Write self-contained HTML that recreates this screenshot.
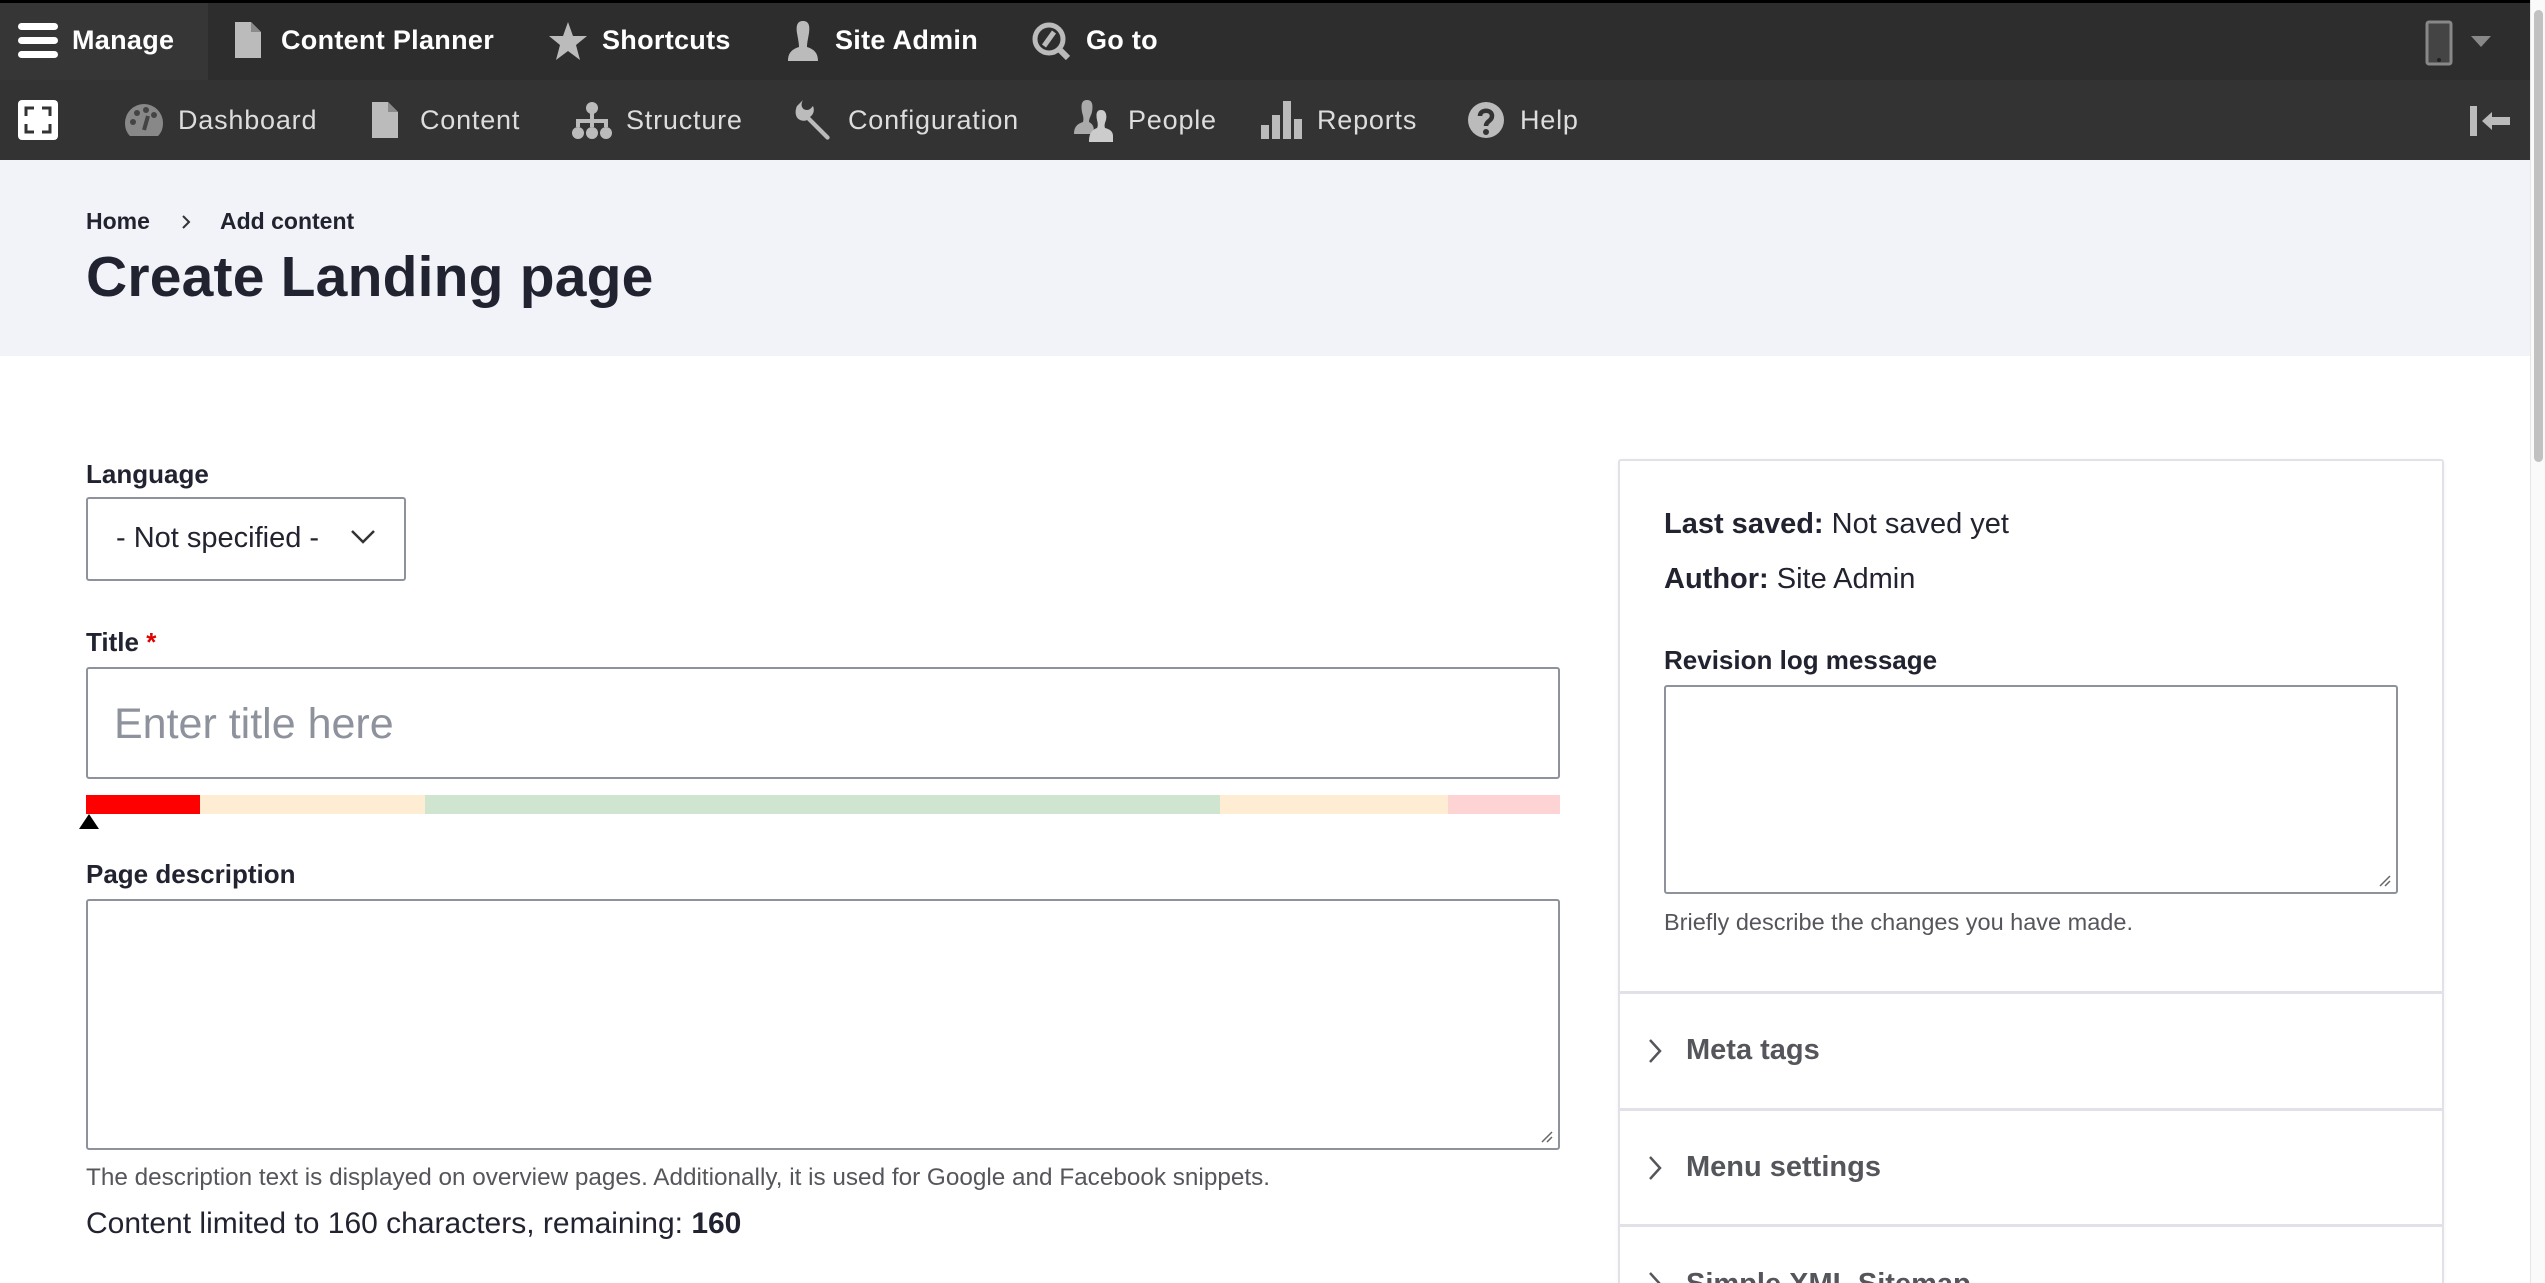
<!DOCTYPE html>
<html style="overflow:hidden;height:1283px"><head><meta charset="utf-8"><style>
*{box-sizing:border-box;margin:0;padding:0}
body{width:2545px;height:1283px;overflow:hidden;background:#fff;font-family:"Liberation Sans",sans-serif;position:relative;color:#222330}
.abs{position:absolute}
#bar1{left:0;top:0;width:2530px;height:80px;background:#2d2d2d;border-top:3px solid #000}
#bar2{left:0;top:80px;width:2530px;height:80px;background:#333}
.t1{position:absolute;top:20px;font-size:27px;font-weight:bold;color:#fff;line-height:40px;letter-spacing:0.3px}
.t2{position:absolute;top:100px;font-size:27px;color:#ddd;line-height:40px;letter-spacing:0.8px}
#hdr{left:0;top:160px;width:2530px;height:196px;background:#f2f3f8}
.lbl{position:absolute;font-size:26px;font-weight:bold;color:#222330}
.box{position:absolute;border:2px solid #8e929c;border-radius:3px;background:#fff}
#sb{left:2530px;top:0;width:15px;height:1283px;background:#fafafa;border-left:1px solid #e6e6e6}
</style></head><body>
<div id="bar1" class="abs"></div>
<div class="abs" style="left:0;top:3px;width:208px;height:77px;background:#363636"></div>
<div id="bar2" class="abs"></div>
<svg class="abs" style="left:18px;top:22px" width="40" height="38"><rect x="0" y="1" width="40" height="7" rx="3.5" fill="#fff"/><rect x="0" y="15" width="40" height="7" rx="3.5" fill="#fff"/><rect x="0" y="29" width="40" height="7" rx="3.5" fill="#fff"/></svg>
<div class="t1" style="left:72px">Manage</div>
<svg class="abs" style="left:235px;top:22px" width="26" height="36"><path d="M0 0H16L26 10V36H0Z" fill="#bbb"/><path d="M16 0V10H26" fill="#8a8a8a"/></svg>
<div class="t1" style="left:281px">Content Planner</div>
<svg class="abs" style="left:548px;top:21px" width="40" height="40"><path d="M20 1L25 15H39L28 24L32 39L20 30L8 39L12 24L1 15H15Z" fill="#bbb"/></svg>
<div class="t1" style="left:602px">Shortcuts</div>
<svg class="abs" style="left:785px;top:21px" width="36" height="40"><path d="M18 0C12 0 11 5 12 12C13 18 14 22 14 26C8 28 3 31 3 40H33C33 31 28 28 22 26C22 22 23 18 24 12C25 5 24 0 18 0Z" fill="#bbb"/></svg>
<div class="t1" style="left:835px">Site Admin</div>
<svg class="abs" style="left:1032px;top:22px" width="40" height="38"><circle cx="17" cy="17" r="14" fill="none" stroke="#bbb" stroke-width="5"/><path d="M12 24L22 10" stroke="#bbb" stroke-width="5"/><path d="M27 27L36 36" stroke="#bbb" stroke-width="6"/></svg>
<div class="t1" style="left:1086px">Go to</div>
<svg class="abs" style="left:2425px;top:20px" width="70" height="46"><rect x="2" y="2" width="24" height="42" rx="2" fill="#444" stroke="#888" stroke-width="3"/><circle cx="14" cy="40" r="2" fill="#222"/><path d="M46 16H66L56 27Z" fill="#888"/></svg>
<svg class="abs" style="left:18px;top:100px" width="40" height="40"><rect x="0" y="0" width="40" height="40" rx="4" fill="#fff"/><path d="M8 16V8H16M24 8H32V16M32 24V32H24M16 32H8V24" stroke="#333" stroke-width="3" fill="none"/></svg>
<svg class="abs" style="left:123px;top:102px" width="42" height="36"><path d="M21 2A19 19 0 0 0 2 21C2 27 4 31 7 34H35C38 31 40 27 40 21A19 19 0 0 0 21 2Z" fill="#888"/><circle cx="10" cy="20" r="3" fill="#444"/><circle cx="14" cy="11" r="3" fill="#444"/><circle cx="23" cy="8" r="3" fill="#444"/><circle cx="31" cy="13" r="3" fill="#444"/><path d="M21 28L25 14" stroke="#444" stroke-width="4"/></svg>
<div class="t2" style="left:178px">Dashboard</div>
<svg class="abs" style="left:372px;top:102px" width="26" height="36"><path d="M0 0H16L26 10V36H0Z" fill="#bbb"/><path d="M16 0V10H26" fill="#8a8a8a"/></svg>
<div class="t2" style="left:420px">Content</div>
<svg class="abs" style="left:572px;top:101px" width="40" height="40"><circle cx="20" cy="7" r="6" fill="#bbb"/><path d="M20 12V20M6 26V20H34V26M20 20V26" stroke="#bbb" stroke-width="4" fill="none"/><circle cx="6" cy="32" r="6" fill="#bbb"/><circle cx="20" cy="32" r="6" fill="#bbb"/><circle cx="34" cy="32" r="6" fill="#bbb"/></svg>
<div class="t2" style="left:626px">Structure</div>
<svg class="abs" style="left:793px;top:100px" width="40" height="42"><path d="M4 6L10 0C7 5 9 10 14 10C17 10 18 8 20 6C22 11 20 15 17 17L36 36C38 38 35 41 33 39L14 20C10 22 4 20 3 15C2 12 3 8 4 6Z" fill="#bbb"/></svg>
<div class="t2" style="left:848px">Configuration</div>
<svg class="abs" style="left:1073px;top:100px" width="40" height="42"><path d="M14 0C8 0 8 6 9 12C10 16 11 18 10 22C4 24 1 27 1 34H20C22 28 20 24 16 22C16 18 18 16 19 12C20 6 20 0 14 0Z" fill="#aaa"/><path d="M28 10C23 10 23 15 24 20C25 24 25 26 24 28C19 30 16 33 16 42H40V36C40 31 36 29 32 28C31 25 32 23 33 20C34 15 33 10 28 10Z" fill="#ccc"/></svg>
<div class="t2" style="left:1128px">People</div>
<svg class="abs" style="left:1261px;top:101px" width="42" height="38"><rect x="0" y="24" width="8" height="14" fill="#bbb"/><rect x="11" y="14" width="8" height="24" fill="#bbb"/><rect x="22" y="0" width="8" height="38" fill="#bbb"/><rect x="33" y="18" width="8" height="20" fill="#bbb"/></svg>
<div class="t2" style="left:1317px">Reports</div>
<svg class="abs" style="left:1467px;top:101px" width="38" height="38"><circle cx="19" cy="19" r="18" fill="#bbb"/><path d="M13 15C13 8 25 8 25 15C25 20 19 20 19 25" stroke="#333" stroke-width="4.5" fill="none"/><circle cx="19" cy="31" r="3" fill="#333"/></svg>
<div class="t2" style="left:1520px">Help</div>
<svg class="abs" style="left:2470px;top:104px" width="42" height="34"><rect x="0" y="2" width="7" height="30" fill="#bbb"/><path d="M12 17L22 8V13H40V21H22V26Z" fill="#bbb"/></svg>
<div id="hdr" class="abs"></div>
<div class="abs" style="left:86px;top:208px;font-size:23px;font-weight:bold">Home</div>
<svg class="abs" style="left:180px;top:213px" width="12" height="18"><path d="M3 3L9 9L3 15" stroke="#333" stroke-width="2" fill="none"/></svg>
<div class="abs" style="left:220px;top:208px;font-size:23px;font-weight:bold">Add content</div>
<div class="abs" style="left:86px;top:244px;font-size:57px;font-weight:bold;letter-spacing:0.2px">Create Landing page</div>
<div class="lbl" style="left:86px;top:459px">Language</div>
<div class="box" style="left:86px;top:497px;width:320px;height:84px"></div>
<div class="abs" style="left:116px;top:522px;font-size:29px">- Not specified -</div>
<svg class="abs" style="left:350px;top:528px" width="26" height="18"><path d="M2 3L13 14L24 3" stroke="#333" stroke-width="2.5" fill="none"/></svg>
<div class="lbl" style="left:86px;top:627px">Title <span style="color:#e00000">*</span></div>
<div class="box" style="left:86px;top:667px;width:1474px;height:112px"></div>
<div class="abs" style="left:114px;top:700px;font-size:43px;color:#8e929c">Enter title here</div>
<div class="abs" style="left:86px;top:795px;width:114px;height:19px;background:#f00"></div>
<div class="abs" style="left:200px;top:795px;width:225px;height:19px;background:#feecd3"></div>
<div class="abs" style="left:425px;top:795px;width:795px;height:19px;background:#cfe5d0"></div>
<div class="abs" style="left:1220px;top:795px;width:228px;height:19px;background:#feecd3"></div>
<div class="abs" style="left:1448px;top:795px;width:112px;height:19px;background:#fdd3d3"></div>
<svg class="abs" style="left:78px;top:814px" width="22" height="16"><path d="M11 0L21 15H1Z" fill="#000"/></svg>
<div class="lbl" style="left:86px;top:859px">Page description</div>
<div class="box" style="left:86px;top:899px;width:1474px;height:251px"></div>
<svg class="abs" style="left:1540px;top:1130px" width="14" height="14"><path d="M2 12L12 2M7 12L12 7" stroke="#666" stroke-width="1.5"/></svg>
<div class="abs" style="left:86px;top:1164px;font-size:24.3px;color:#55565b">The description text is displayed on overview pages. Additionally, it is used for Google and Facebook snippets.</div>
<div class="abs" style="left:86px;top:1207px;font-size:30px">Content limited to 160 characters, remaining: <b>160</b></div>
<div class="abs" style="left:1618px;top:459px;width:826px;height:840px;border:2px solid #e1e2e7;border-radius:3px;background:#fff;box-shadow:0 1px 3px rgba(0,0,0,.06)"></div>
<div class="abs" style="left:1664px;top:508px;font-size:29px"><b>Last saved:</b> Not saved yet</div>
<div class="abs" style="left:1664px;top:563px;font-size:29px"><b>Author:</b> Site Admin</div>
<div class="lbl" style="left:1664px;top:645px">Revision log message</div>
<div class="box" style="left:1664px;top:685px;width:734px;height:209px"></div>
<svg class="abs" style="left:2378px;top:874px" width="14" height="14"><path d="M2 12L12 2M7 12L12 7" stroke="#666" stroke-width="1.5"/></svg>
<div class="abs" style="left:1664px;top:909px;font-size:23.5px;color:#55565b">Briefly describe the changes you have made.</div>
<div class="abs" style="left:1620px;top:991px;width:822px;height:3px;background:#e1e2e7"></div>
<svg class="abs" style="left:1647px;top:1038px" width="16" height="26"><path d="M3 2L13 13L3 24" stroke="#55565b" stroke-width="2.5" fill="none"/></svg>
<div class="abs" style="left:1686px;top:1034px;font-size:29px;font-weight:bold;color:#55565b">Meta tags</div>
<div class="abs" style="left:1620px;top:1108px;width:822px;height:3px;background:#e1e2e7"></div>
<svg class="abs" style="left:1647px;top:1155px" width="16" height="26"><path d="M3 2L13 13L3 24" stroke="#55565b" stroke-width="2.5" fill="none"/></svg>
<div class="abs" style="left:1686px;top:1151px;font-size:29px;font-weight:bold;color:#55565b">Menu settings</div>
<div class="abs" style="left:1620px;top:1224px;width:822px;height:3px;background:#e1e2e7"></div>
<svg class="abs" style="left:1647px;top:1271px" width="16" height="26"><path d="M3 2L13 13L3 24" stroke="#55565b" stroke-width="2.5" fill="none"/></svg>
<div class="abs" style="left:1686px;top:1268px;font-size:29px;font-weight:bold;color:#55565b">Simple XML Sitemap</div>
<div id="sb" class="abs"><div style="position:absolute;left:3px;top:10px;width:9px;height:452px;border-radius:5px;background:#c1c1c1"></div></div>
</body></html>
